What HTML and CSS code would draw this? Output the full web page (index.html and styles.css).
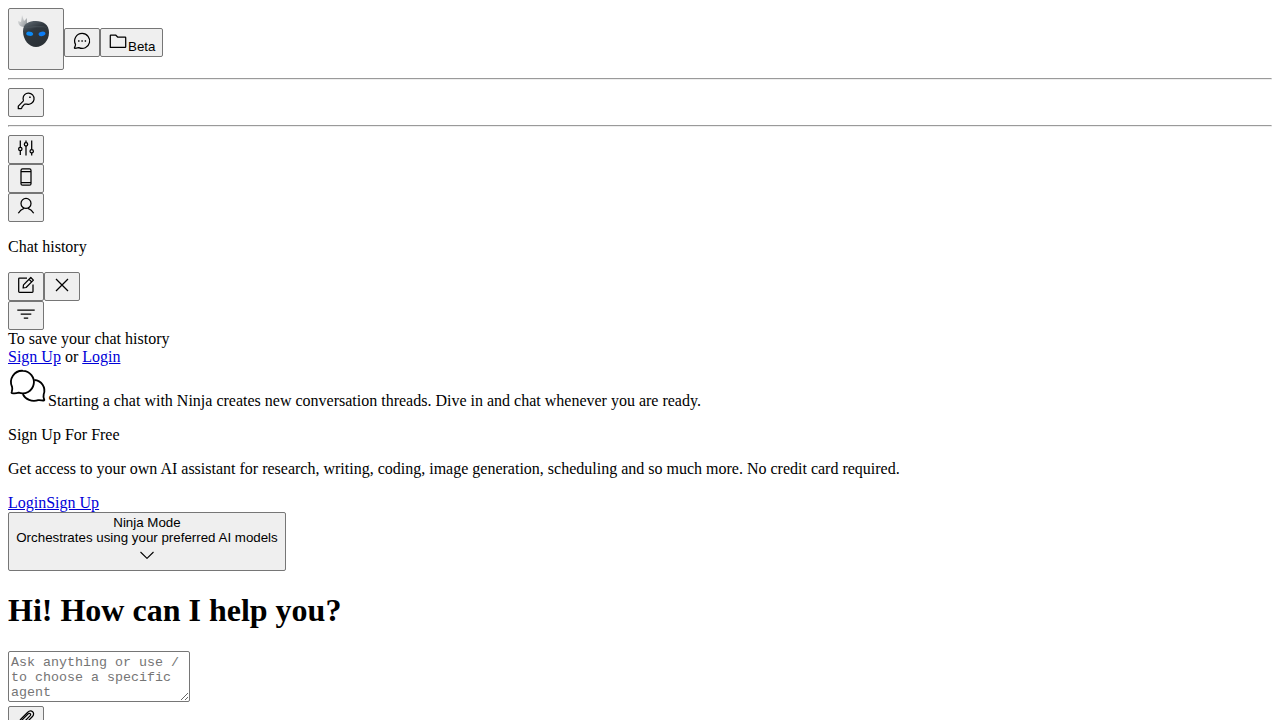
FILE: index.html
```html
<!DOCTYPE html>
<html lang="en">
<head>
<meta charset="utf-8">
<title>Ninja</title>
<link rel="stylesheet" href="styles.css">
</head>
<body>
<nav>
  <div class="row top">
    <button class="btn logo" aria-label="Ninja">
      <svg width="40" height="40" viewBox="0 0 40 40">
        <defs>
          <linearGradient id="head" x1="0" y1="0" x2="0.5" y2="1"><stop offset="0" stop-color="#68727a"/><stop offset=".42" stop-color="#30383f"/><stop offset="1" stop-color="#2b3136"/></linearGradient>
          <linearGradient id="knot" x1="0" y1="0" x2="1" y2="1"><stop offset="0" stop-color="#eeeeee"/><stop offset="1" stop-color="#858b8f"/></linearGradient>
        </defs>
        <path d="M8 14C4 14 2 11 2 8l3 1 1-7 2 6 3-3 0 7-1 4z" fill="url(#knot)"/>
        <path d="M7 18c0-7.500 6-10 13-10s13 3.500 13 11.500S27 34 20 34 7 27 7 18z" fill="url(#head)"/>
        <path d="M8 15c6-2 18-2.500 24-.5-7-.3-17-.2-24 .5z" fill="#5c666b" opacity=".5"/>
        <ellipse cx="13.700" cy="20.800" rx="3.500" ry="2.100" transform="rotate(9 13.700 20.800)" fill="#0c8af5"/>
        <ellipse cx="26" cy="20.800" rx="3.500" ry="2.200" transform="rotate(-12 26 20.800)" fill="#0c7cf5"/>
      </svg>
    </button>
    <button class="btn small" aria-label="Chat"><svg class="icon" viewBox="0 0 20 20"><path d="M10.200 2.400a7.500 7.500 0 1 1-3.400 14.200c-1.200.3-2.700.7-4.100.7-.4 0-.3-.5-.1-.9.500-.9.900-2 .9-3A7.500 7.500 0 0 1 10.200 2.400z"/><path class="dot" d="M6.100 9.300h1.400v1.400H6.100zM9.400 9.300h1.400v1.400H9.400zM12.700 9.300h1.400v1.400h-1.400z"/></svg></button>
    <button class="btn small beta"><svg class="icon" viewBox="0 0 20 20"><path d="M2.300 16.400V4.600c0-.4.200-.6.600-.6h4.700l2 2h7.500c.4 0 .6.200.6.600v9.200c0 .4-.2.600-.6.600z"/></svg><span>Beta</span></button>
  </div>
  <hr>
  <div class="row">
    <button class="btn" aria-label="Key"><svg class="icon" viewBox="0 0 20 20"><path d="M12.300 2.100a5.600 5.600 0 1 1-1.300 11L8.700 13.200c-.8 0-.9 1.700-2 1.900-.8.200-.4 2.200-1.500 2.600H2.300v-2.600l4.900-5c.5-.6-.1-1.500-.1-2.800a5.300 5.300 0 0 1 5.200-5.200z"/><path class="dot" d="M13.200 5.500h1.500V7h-1.500z"/></svg></button>
  </div>
  <hr>
  <div class="column">
    <button class="btn" aria-label="Settings"><svg class="icon" viewBox="0 0 20 20"><path d="M4.300 2.500v6.800M4.300 12.700V17M10 2.500v2.100M10 8v9.500M15.700 2.500v9M15.700 14.900v2.600"/><circle cx="4.300" cy="11" r="1.700"/><circle cx="10" cy="6.300" r="1.700"/><circle cx="15.700" cy="13.200" r="1.700"/></svg></button>
    <button class="btn" aria-label="Mobile app"><svg class="icon" viewBox="0 0 20 20"><rect x="5" y="1.900" width="10" height="16.300" rx="1.500"/><path d="M5 4.500h10M5 15.600h10"/></svg></button>
    <button class="btn" aria-label="Account"><svg class="icon" viewBox="0 0 20 20"><circle cx="10" cy="7.400" r="5"/><path d="M2.300 17.200c1.300-2.400 3.400-4.200 5.700-4.900M12 12.300c2.300.7 4.400 2.500 5.700 4.900"/></svg></button>
  </div>
</nav>
<aside>
  <p>Chat history</p>
  <div class="row">
    <button class="btn" aria-label="New chat"><svg class="icon" viewBox="0 0 20 20"><path d="M11 3H3.500c-.5 0-.8.3-.8.8v12.700c0 .5.300.8.800.8h12.700c.5 0 .8-.3.800-.8V9.500"/><path d="m7.500 9.900 7.300-7.400 2.600 2.600-7.300 7.400-3 .5zM13 4.300l2.600 2.600"/></svg></button>
    <button class="btn" aria-label="Close"><svg class="icon" viewBox="0 0 20 20"><path d="m4 4 12 12M16 4 4 16"/></svg></button>
  </div>
  <div class="row">
    <button class="btn" aria-label="Filter"><svg class="icon" viewBox="0 0 20 20"><path d="M1.300 6.200h17.400M4.700 10.200h10.600M7.800 14.200h4.400"/></svg></button>
  </div>
  <div>To save your chat history</div>
  <div><a href="#">Sign Up</a> or <a href="#">Login</a></div>
  <div class="empty"><svg class="threads" viewBox="0 0 40 40"><path d="M15 4.800a11.300 11.300 0 1 1-4.300 21.900c-2.100.6-4.600.7-6.800.4-.5-.1-.4-.6-.2-1 .7-1.800.9-3.300.4-5.100A11.300 11.300 0 0 1 15 4.800z"/><path d="M26.300 14a10.600 10.600 0 0 1 9.400 14.300c-.5 1.700-.1 3.800.6 5.500.1.400-.1.700-.6.700-2 .1-3.700-.2-5.500-.4-6.200 2.100-12.900-.7-15.400-6"/></svg>Starting a chat with Ninja creates new conversation threads. Dive in and chat whenever you are ready.</div>
</aside>
<section>
  <p>Sign Up For Free</p>
  <p>Get access to your own AI assistant for research, writing, coding, image generation, scheduling and so much more. No credit card required.</p>
  <div><a href="#">Login</a><a href="#">Sign Up</a></div>
</section>
<main>
  <button class="btn mode">
    <span>Ninja Mode</span>
    <span>Orchestrates using your preferred AI models</span>
    <svg class="icon thin" viewBox="0 0 20 20"><path d="m3.500 7 6.500 6.300L16.500 7"/></svg>
  </button>
  <h1>Hi! How can I help you?</h1>
  <textarea class="prompt" placeholder="Ask anything or use / to choose a specific agent"></textarea>
  <div class="row">
    <button class="btn" aria-label="Attach file"><svg class="icon" viewBox="0 0 20 20"><path d="m7.500 13.500 6.500-6.600c1.700-1.700-.4-3.400-1.800-2l-8 8c-2.600 2.600.9 6 3.500 3.500l8.500-8.600c3.800-3.900-1-7.900-4.700-4.300L4 11"/></svg></button>
  </div>
</main>
</body>
</html>
```
FILE: styles.css
```css
html { overflow: hidden; }
body { margin: 8px; font: 16px/18px "Liberation Serif", "Times New Roman", serif; color: #000; background: #fff; }
p { margin: 16px 0; }
a { color: #0000d8; }
hr { margin: 8px 0; }
.row { display: flex; align-items: flex-start; }
.top { height: 62px; }
.column { display: flex; flex-direction: column; align-items: flex-start; }
.btn {
  box-sizing: border-box;
  display: block;
  height: 29px;
  margin: 0;
  padding: 2px 7px 5px;
  border: 1px solid #767676;
  border-radius: 2px;
  background: #efefef;
  color: #000;
  font: 13.333px/15px "Liberation Sans", Arial, sans-serif;
}
.logo { width: 56px; height: 62px; padding: 4px 7px 16px; }
.logo svg { display: block; }
.small { margin-top: 20px; }
.beta { display: flex; padding-bottom: 2px; }
.beta span { margin-top: 8px; }
.icon { display: block; width: 20px; height: 20px; fill: none; stroke: #000; stroke-width: 1.25; stroke-linejoin: round; }
.dot { fill: #000; stroke: none; }
.thin { stroke-width: 1.1; }
.empty { height: 44px; }
.threads { width: 40px; height: 40px; fill: none; stroke: #000; stroke-width: 1.8; stroke-linejoin: round; vertical-align: baseline; }
.mode { display: flex; flex-direction: column; align-items: center; width: 278px; height: 59px; padding: 2px 7px; white-space: nowrap; }
h1 { margin: 21px 0 22px; font-size: 32px; line-height: 37px; }
.prompt {
  box-sizing: border-box;
  display: block;
  width: 182px;
  height: 51px;
  margin: 0 0 4px;
  padding: 3px 2px 1px;
  border: 1px solid #767676;
  border-radius: 2px;
  font: 13.333px/15px "Liberation Mono", "Courier New", monospace;
  overflow: hidden;
}
.prompt::placeholder { color: #757575; }
```
